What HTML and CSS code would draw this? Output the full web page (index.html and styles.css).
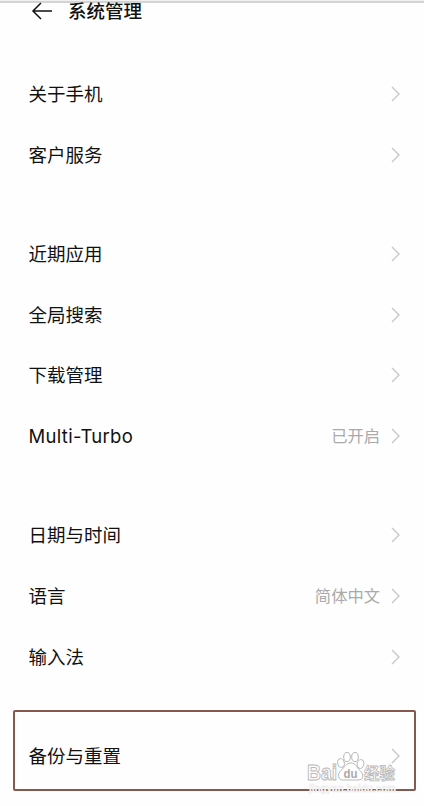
FILE: index.html
```html
<!DOCTYPE html>
<html lang="zh-CN">
<head>
<meta charset="UTF-8">
<meta name="viewport" content="width=device-width, initial-scale=1.0">
<title>系统管理</title>
<link rel="stylesheet" href="styles.css">
</head>
<body>
<svg width="0" height="0" class="defs">
  <symbol id="chevron" viewBox="0 0 9 16">
    <path d="M1 1 L8 8 L1 15" fill="none" stroke="currentColor" stroke-width="1.4"/>
  </symbol>
</svg>

<header class="header">
  <svg class="back" viewBox="0 0 22 18">
    <path d="M10 1 L2 9 L10 17 M2 9 H21" fill="none" stroke="#111" stroke-width="1.5"/>
  </svg>
  <h1>系统管理</h1>
</header>

<main>
  <ul class="group">
    <li class="row"><span>关于手机</span><svg class="arrow"><use href="#chevron"/></svg></li>
    <li class="row"><span>客户服务</span><svg class="arrow"><use href="#chevron"/></svg></li>
  </ul>
  <ul class="group">
    <li class="row"><span>近期应用</span><svg class="arrow"><use href="#chevron"/></svg></li>
    <li class="row"><span>全局搜索</span><svg class="arrow"><use href="#chevron"/></svg></li>
    <li class="row"><span>下载管理</span><svg class="arrow"><use href="#chevron"/></svg></li>
    <li class="row"><span class="latin">Multi-Turbo</span><em>已开启</em><svg class="arrow"><use href="#chevron"/></svg></li>
  </ul>
  <ul class="group">
    <li class="row"><span>日期与时间</span><svg class="arrow"><use href="#chevron"/></svg></li>
    <li class="row"><span>语言</span><em>简体中文</em><svg class="arrow"><use href="#chevron"/></svg></li>
    <li class="row"><span>输入法</span><svg class="arrow"><use href="#chevron"/></svg></li>
  </ul>
  <ul class="group">
    <li class="row marked"><span>备份与重置</span><svg class="arrow"><use href="#chevron"/></svg></li>
  </ul>
</main>

<div class="watermark">
  <svg viewBox="0 0 98 46">
    <g class="outline">
      <text class="wm-bai" x="0" y="29" textLength="30" lengthAdjust="spacingAndGlyphs">Bai</text>
      <ellipse cx="34" cy="12" rx="3.3" ry="4.4" transform="rotate(-15 34 12)"/>
      <ellipse cx="40" cy="6" rx="3.3" ry="4.6"/>
      <ellipse cx="48" cy="6" rx="3.3" ry="4.6"/>
      <ellipse cx="53.5" cy="13" rx="3.3" ry="4.4" transform="rotate(15 53.5 13)"/>
      <path d="M44 12 C39 12 38 16 34 19.5 C30 23 31 29 36 29 H51 C57 29 57 23 53 19.5 C49 16 49 12 44 12 Z"/>
      <text class="wm-cn" x="57" y="28" textLength="31" lengthAdjust="spacingAndGlyphs">经验</text>
    </g>
    <text class="wm-du" x="36.5" y="26.5" textLength="14" lengthAdjust="spacingAndGlyphs">du</text>
    <text class="wm-url" x="2" y="41" textLength="87" lengthAdjust="spacingAndGlyphs">jingyan.baidu.com</text>
  </svg>
</div>
</body>
</html>
```

FILE: styles.css
```css
*,
*::after {
    box-sizing: border-box;
}
body {
    margin: 0;
    height: 806px;
    position: relative;
    overflow: hidden;
    background: #fefefe;
    color: #111;
    font-family: "Noto Sans CJK SC", sans-serif;
    border-top: 1px solid #f0f0f0;
}
.defs {
    position: absolute;
}
.header {
    display: flex;
    align-items: center;
    height: 62.6px;
    padding: 0 0 45px 31px;
    border-top: 2px solid #d3d5d4;
}
.back {
    width: 22px;
    height: 18px;
    flex: none;
}
h1 {
    margin: 0 0 2px 15px;
    font-size: 18.5px;
    line-height: 20px;
    font-weight: 500;
}
.group {
    list-style: none;
    margin: 0 0 38.6px;
    padding: 0;
}
.row {
    display: flex;
    align-items: center;
    height: 60.7px;
    padding: 0 24px 0 28.5px;
    font-size: 18.5px;
    position: relative;
}
.row span {
    flex: 1;
    padding-bottom: 2px;
}
.row .latin {
    font-family: Inter, "Noto Sans CJK SC", sans-serif;
    letter-spacing: 0.3px;
    padding-bottom: 0;
}
.row em {
    font-style: normal;
    font-size: 16.3px;
    color: #aaa;
    margin-right: 11px;
    padding-bottom: 2px;
}
.arrow {
    width: 9px;
    height: 16px;
    color: #c8c8c8;
}
.marked::after {
    content: "";
    position: absolute;
    top: -16px;
    left: 12.5px;
    right: 8px;
    height: 81px;
    border: 2px solid #86594f;
    border-radius: 2px;
}
/* watermark over the bottom right corner */
.watermark {
    position: absolute;
    left: 307px;
    top: 750px;
    width: 98px;
    height: 46px;
}
.watermark svg {
    display: block;
    width: 98px;
    height: 46px;
    overflow: visible;
}
.outline {
    fill: #fff;
    stroke: #b8b8b8;
    stroke-width: 1;
}
.wm-bai {
    font: bold 22px "Liberation Sans", sans-serif;
}
.wm-cn {
    font: bold 16px "Noto Sans CJK SC", sans-serif;
    stroke-width: 0.8;
}
.wm-du {
    font: bold 13px "Liberation Sans", sans-serif;
    fill: #aaa;
}
.wm-url {
    font: bold 10px "Liberation Sans", sans-serif;
    fill: #fff;
    stroke: #e4e4e4;
    stroke-width: 0.4;
}
```
